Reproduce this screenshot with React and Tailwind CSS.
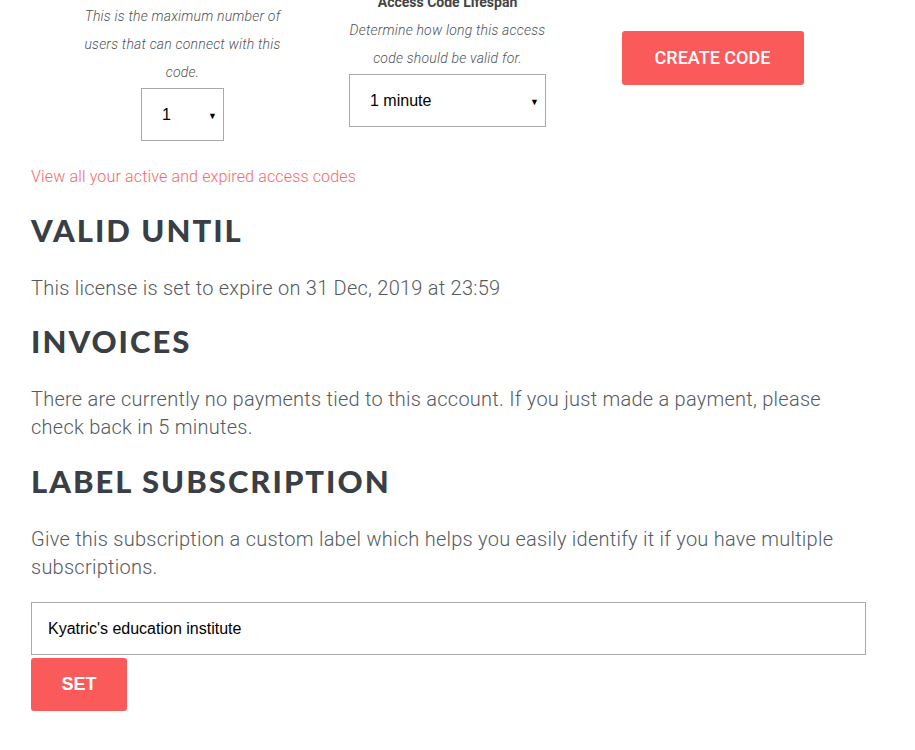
import React, { useState } from 'react';

const Heading = ({ children }) => (
  <h2 className="font-['Lato',sans-serif] font-black text-[31px] leading-[40px] tracking-[0.065em] text-[#3a3f45] uppercase">
    {children}
  </h2>
);

const Body = ({ children, className = '' }) => (
  <p className={`font-['Roboto',sans-serif] font-light text-[20px] leading-[28px] tracking-[0.25px] text-[#555a5f] ${className}`}>
    {children}
  </p>
);

const SelectBox = ({ value, onChange, options, className }) => (
  <div className={`relative h-[53px] border border-[#aaaaaa] bg-white ${className}`}>
    <select
      value={value}
      onChange={(e) => onChange(e.target.value)}
      className="appearance-none w-full h-full bg-transparent pl-[20px] pr-6 font-['Liberation_Sans',sans-serif] text-[16px] text-black outline-none"
    >
      {options.map((o) => (
        <option key={o} value={o}>{o}</option>
      ))}
    </select>
    <span className="pointer-events-none absolute right-[6px] top-1/2 -translate-y-1/2 text-[9px] leading-none text-black">▼</span>
  </div>
);

const App = () => {
  const [users, setUsers] = useState('1');
  const [lifespan, setLifespan] = useState('1 minute');
  const [label, setLabel] = useState("Kyatric's education institute");

  return (
    <div className="w-[915px] h-[750px] overflow-hidden bg-white">
      <div className="pl-[31px] w-[866px] -mt-[26px]">
        {/* Access code generator */}
        <div className="flex items-center pl-[19px]">
          <div className="w-[265px] flex flex-col items-center">
            <div className="w-[212px] text-center">
              <h4 className="font-['Roboto',sans-serif] font-bold text-[14px] leading-[28px] text-[#444]">Maximum Users</h4>
              <p className="font-['Roboto',sans-serif] font-light italic text-[14px] leading-[28px] tracking-[0.2px] text-[#4f5357]">
                This is the maximum number of users that can connect with this code.
              </p>
            </div>
            <SelectBox value={users} onChange={setUsers} options={['1', '2', '5', '10', '25']} className="w-[83px] mt-[2px]" />
          </div>
          <div className="w-[265px] flex flex-col items-center">
            <div className="w-[210px] text-center">
              <h4 className="font-['Roboto',sans-serif] font-bold text-[14px] leading-[28px] text-[#444]">Access Code Lifespan</h4>
              <p className="font-['Roboto',sans-serif] font-light italic text-[14px] leading-[28px] tracking-[0.2px] text-[#4f5357]">
                Determine how long this access code should be valid for.
              </p>
            </div>
            <SelectBox value={lifespan} onChange={setLifespan} options={['1 minute', '1 hour', '1 day', '1 week']} className="w-[197px] mt-[2px]" />
          </div>
          <div className="w-[265px] flex justify-center">
            <button className="w-[182px] h-[54px] rounded-[3px] bg-[#fa5a5a] text-white font-['Roboto',sans-serif] font-medium text-[18px] uppercase">
              Create Code
            </button>
          </div>
        </div>

        <a href="#" className="block mt-[24px] font-['Roboto',sans-serif] font-light text-[16px] leading-[24px] tracking-[0.15px] text-[#f76868]">
          View all your active and expired access codes
        </a>

        {/* Valid until */}
        <div className="mt-[21px]">
          <Heading>Valid Until</Heading>
          <Body className="mt-[24px]">This license is set to expire on 31 Dec, 2019 at 23:59</Body>
        </div>

        {/* Invoices */}
        <div className="mt-[19px]">
          <Heading>Invoices</Heading>
          <Body className="mt-[24px]">
            There are currently no payments tied to this account. If you just made a payment, please check back in 5 minutes.
          </Body>
        </div>

        {/* Label subscription */}
        <div className="mt-[20px]">
          <Heading>Label Subscription</Heading>
          <Body className="mt-[24px]">
            Give this subscription a custom label which helps you easily identify it if you have multiple subscriptions.
          </Body>
          <input
            type="text"
            value={label}
            onChange={(e) => setLabel(e.target.value)}
            className="block mt-[21px] w-[835px] h-[53px] border border-[#aaaaaa] px-[16px] font-['Liberation_Sans',sans-serif] text-[16px] text-black outline-none"
          />
          <button className="block mt-[3px] w-[96px] h-[53px] rounded-[3px] bg-[#fa5a5a] text-white font-['Liberation_Sans',sans-serif] font-bold text-[18px] uppercase">
            Set
          </button>
        </div>
      </div>
    </div>
  );
};

export default App;
